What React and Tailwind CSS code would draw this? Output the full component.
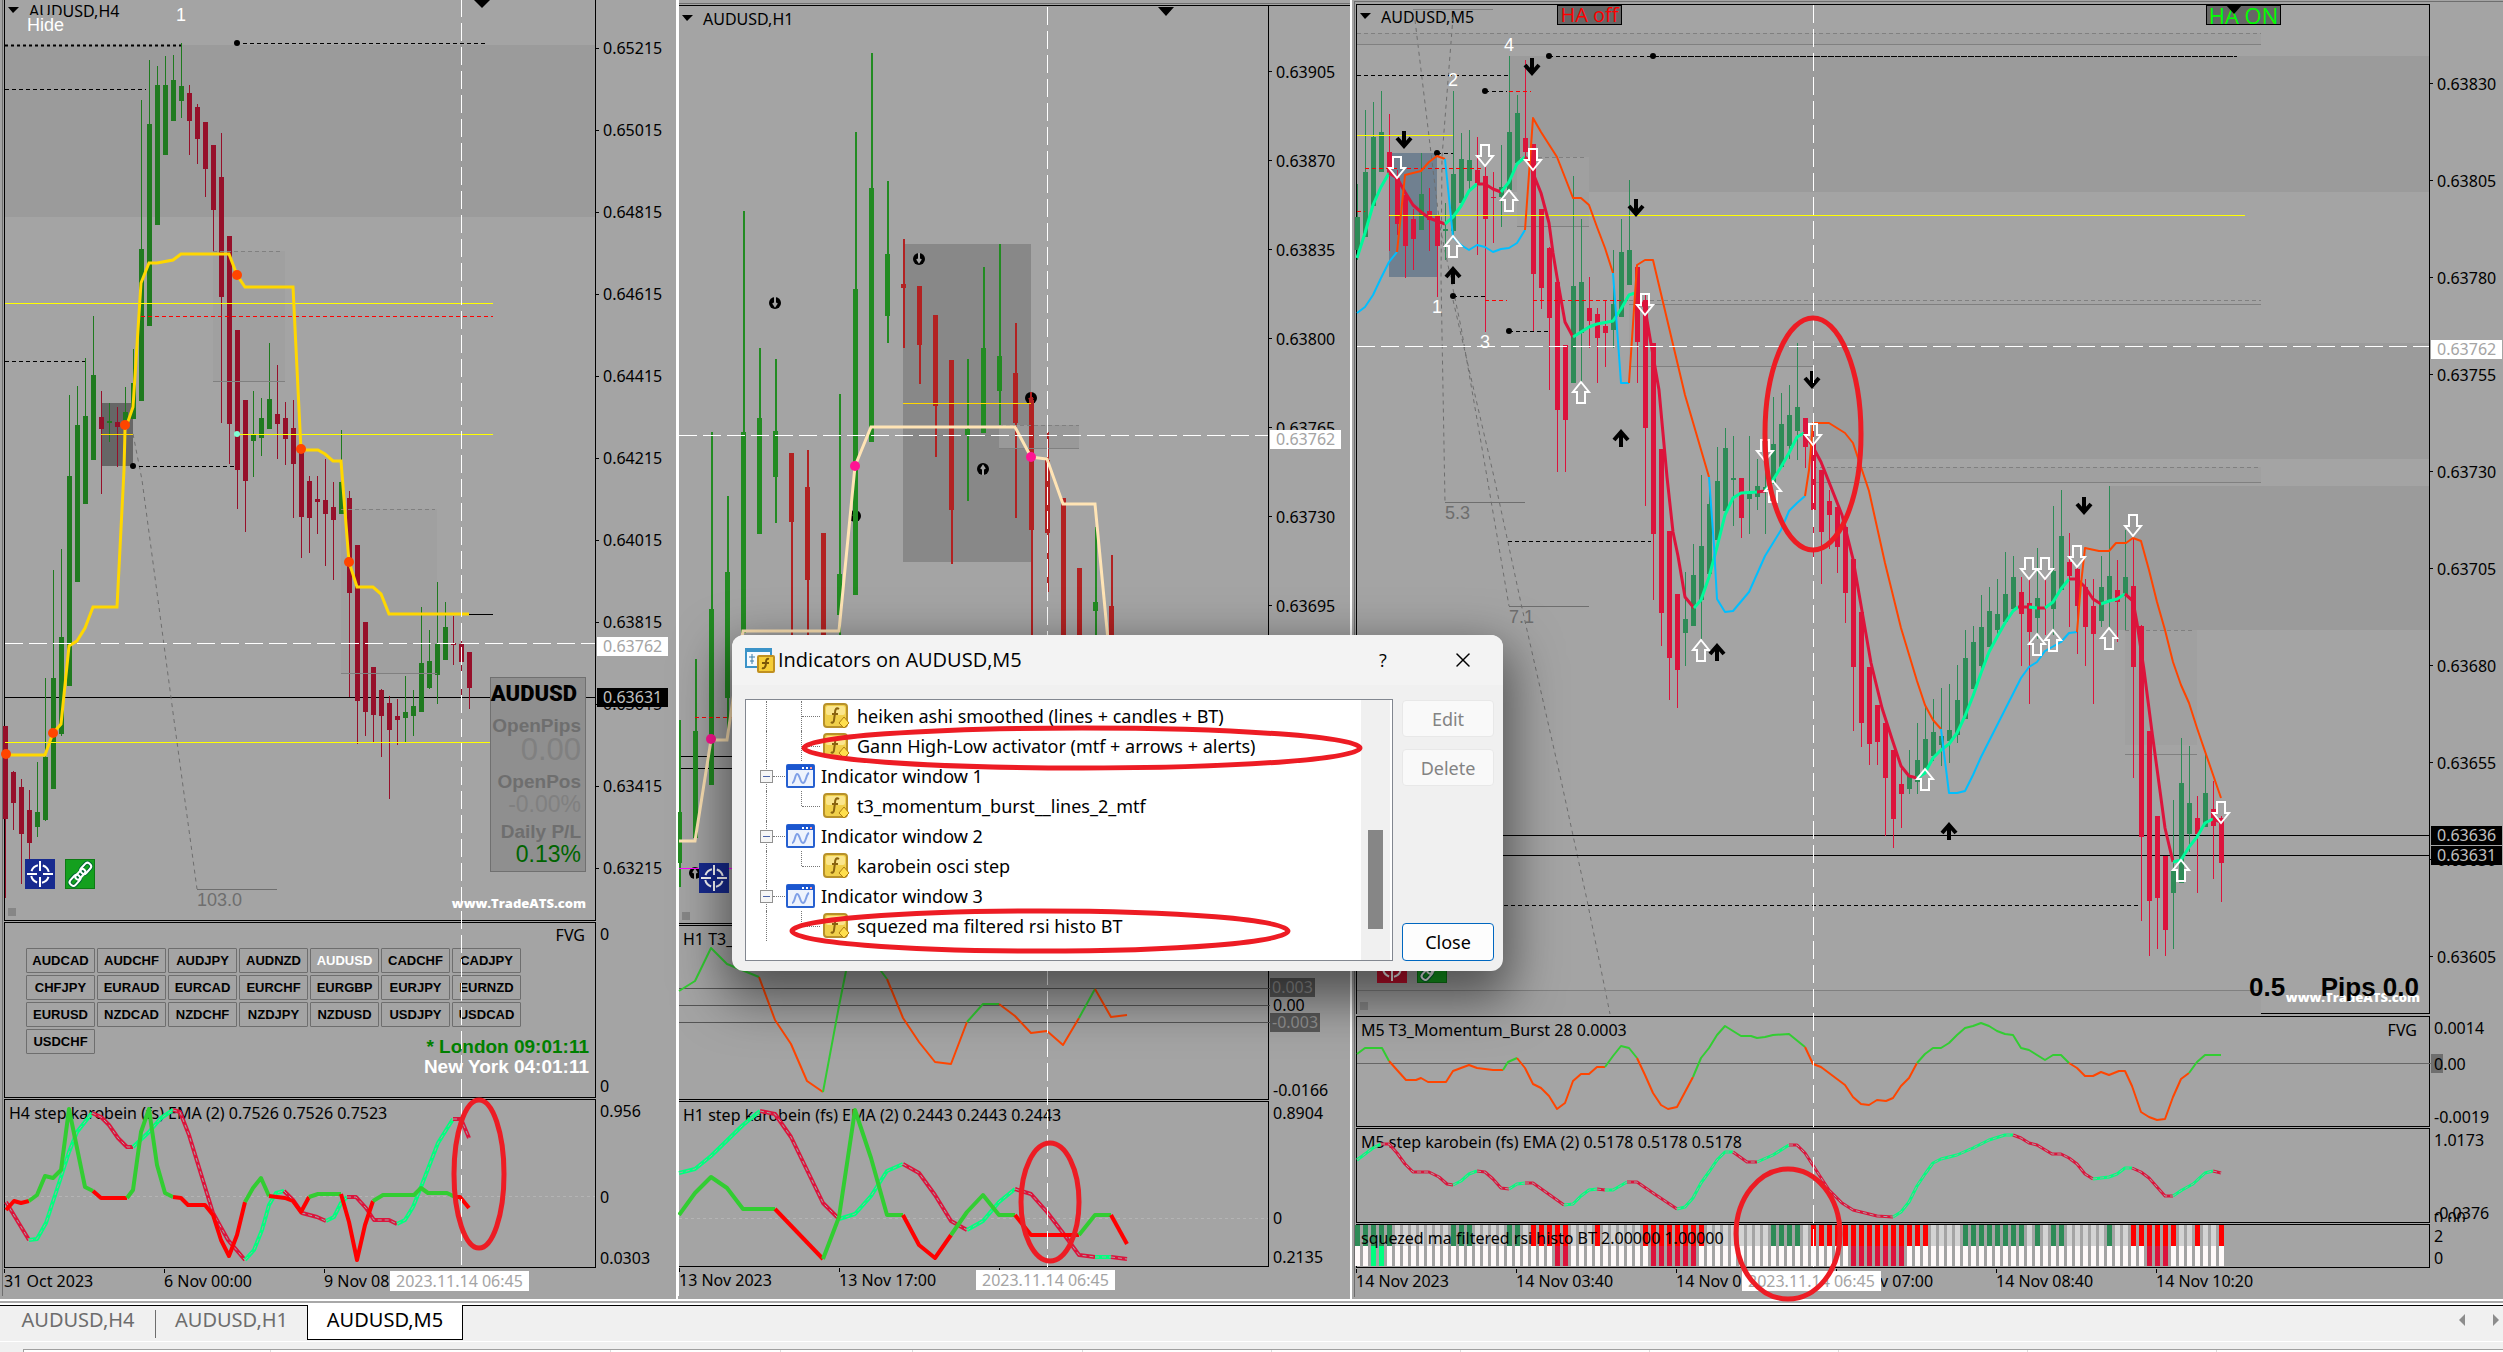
import React from 'react';
import { X } from 'lucide-react';

const GREEN = '#32cd32';
const RED = '#ff0000';
const SPRING = '#00ff7f';
const CRIMSON = '#dc143c';
const ORANGE = '#ff4500';
const SKY = '#00bfff';

// candle: [up, high, bodyTop, bodyBottom, low]
const H4_CANDLES = [
  [0, 726, 726, 819, 898], [0, 771, 772, 803, 830], [0, 779, 787, 834, 884], [0, 790, 810, 843, 860],
  [1, 762, 812, 827, 837], [1, 678, 757, 820, 821], [1, 570, 678, 789, 789], [1, 549, 637, 734, 736],
  [1, 395, 476, 686, 686], [1, 386, 425, 582, 582], [1, 358, 416, 504, 504], [1, 316, 375, 460, 460],
  [0, 391, 417, 429, 494], [1, 403, 421, 423, 442], [0, 407, 422, 427, 467], [1, 387, 412, 427, 427],
  [1, 349, 383, 419, 419], [1, 100, 249, 401, 401], [1, 60, 124, 326, 326], [1, 66, 85, 225, 225],
  [1, 56, 85, 155, 155], [1, 55, 80, 121, 121], [1, 43, 86, 101, 118], [0, 85, 93, 121, 155],
  [0, 104, 107, 139, 164], [0, 122, 122, 169, 197], [0, 145, 145, 210, 252], [0, 133, 177, 297, 423],
  [0, 236, 236, 424, 464], [0, 330, 330, 470, 509], [0, 400, 400, 481, 532], [1, 391, 435, 441, 477],
  [1, 398, 418, 438, 456], [1, 343, 399, 429, 429], [0, 365, 414, 424, 459], [0, 402, 418, 439, 465],
  [0, 400, 428, 464, 518], [0, 450, 450, 517, 558], [0, 476, 481, 518, 553], [0, 476, 499, 502, 534],
  [0, 459, 500, 514, 566], [0, 482, 507, 520, 580], [1, 430, 482, 514, 514], [0, 491, 498, 593, 697],
  [0, 545, 545, 701, 744], [0, 622, 622, 712, 736], [0, 667, 667, 715, 742], [0, 689, 690, 716, 757],
  [0, 696, 703, 730, 799], [0, 699, 716, 720, 745], [1, 676, 712, 718, 742], [1, 690, 706, 716, 736],
  [1, 607, 663, 712, 712], [1, 630, 661, 688, 689], [1, 582, 644, 675, 704], [1, 602, 627, 660, 660],
  [0, 616, 643, 645, 665], [0, 641, 644, 662, 695], [0, 652, 652, 688, 709],
];

const H1_CANDLES = [
  [1, 720, 812, 863, 887], [1, 659, 731, 838, 838], [1, 432, 609, 785, 785], [1, 496, 572, 698, 736],
  [1, 211, 432, 633, 633], [1, 348, 418, 534, 534], [1, 359, 431, 477, 523], [0, 453, 453, 522, 640],
  [0, 450, 487, 580, 640], [0, 533, 533, 640, 640], [1, 394, 574, 615, 640], [1, 132, 289, 595, 595],
  [1, 53, 188, 442, 442], [1, 181, 254, 316, 343], [0, 239, 284, 288, 348], [0, 286, 286, 345, 384],
  [0, 315, 315, 406, 457], [0, 360, 360, 510, 564], [1, 359, 429, 435, 501], [1, 267, 348, 433, 433],
  [1, 244, 356, 391, 425], [0, 323, 373, 423, 518], [0, 397, 400, 530, 640], [0, 432, 460, 533, 592],
  [0, 498, 498, 640, 640], [0, 568, 568, 640, 640], [1, 527, 602, 611, 640], [0, 555, 606, 640, 640],
];

const M5_CANDLES = [
  [1, 184, 217, 250, 260], [1, 110, 172, 237, 237], [1, 102, 137, 206, 206], [1, 91, 132, 172, 172],
  [0, 114, 152, 175, 251], [0, 170, 178, 224, 235], [0, 193, 195, 246, 278], [0, 209, 219, 239, 270],
  [1, 153, 194, 230, 230], [0, 188, 211, 220, 251], [0, 215, 215, 246, 297], [1, 203, 229, 231, 260],
  [1, 91, 174, 231, 237], [1, 133, 159, 203, 203], [1, 130, 160, 181, 190], [0, 137, 170, 183, 255],
  [0, 167, 176, 219, 332], [0, 172, 197, 198, 243], [1, 145, 187, 197, 227], [1, 56, 132, 190, 190],
  [1, 95, 113, 163, 163], [0, 60, 138, 152, 160], [0, 144, 144, 274, 331], [0, 209, 209, 288, 309],
  [0, 247, 248, 318, 390], [0, 280, 282, 410, 472], [0, 345, 345, 420, 472], [1, 176, 286, 383, 383],
  [1, 219, 282, 333, 383], [0, 277, 308, 321, 348], [0, 308, 314, 338, 383], [0, 300, 326, 333, 367],
  [1, 250, 304, 330, 348], [1, 219, 252, 317, 317], [1, 180, 250, 285, 285], [0, 267, 267, 342, 383],
  [0, 295, 300, 428, 506], [0, 343, 343, 534, 600], [0, 449, 449, 613, 646], [0, 531, 531, 658, 700],
  [0, 594, 594, 670, 708], [1, 572, 619, 633, 666], [1, 544, 575, 626, 626], [1, 475, 546, 600, 639],
  [1, 491, 504, 574, 574], [1, 447, 481, 540, 540], [1, 428, 448, 511, 511], [1, 436, 478, 480, 526],
  [0, 478, 478, 518, 538], [1, 436, 494, 499, 534], [1, 459, 486, 497, 510], [1, 470, 487, 491, 534],
  [1, 397, 444, 484, 484], [1, 393, 424, 467, 467], [1, 385, 415, 446, 459], [1, 343, 407, 431, 460],
  [0, 418, 418, 447, 468], [0, 430, 442, 510, 557], [0, 470, 470, 532, 584], [0, 490, 501, 515, 549],
  [0, 507, 507, 547, 573], [0, 527, 527, 593, 623], [0, 559, 559, 667, 731], [0, 612, 612, 723, 747],
  [0, 667, 667, 744, 765], [0, 705, 705, 742, 765], [0, 723, 723, 778, 836], [0, 750, 750, 819, 848],
  [0, 767, 784, 794, 828], [1, 750, 776, 789, 794], [1, 723, 760, 782, 794], [1, 707, 739, 770, 770],
  [1, 699, 732, 756, 761], [1, 688, 736, 745, 766], [1, 684, 730, 741, 763], [1, 665, 700, 735, 743],
  [1, 630, 658, 719, 719], [1, 626, 642, 689, 689], [1, 595, 627, 666, 670], [1, 587, 611, 647, 647],
  [1, 579, 614, 630, 635], [1, 552, 594, 622, 622], [1, 556, 577, 609, 609], [0, 577, 592, 614, 666],
  [0, 579, 603, 632, 704], [1, 548, 598, 618, 639], [0, 577, 607, 608, 635], [1, 506, 571, 609, 635],
  [1, 490, 536, 590, 590], [0, 533, 562, 576, 627], [0, 567, 569, 606, 654], [0, 579, 587, 627, 666],
  [0, 579, 606, 634, 704], [1, 556, 587, 621, 627], [1, 486, 576, 602, 627], [0, 560, 590, 602, 642],
  [1, 530, 577, 595, 630], [0, 538, 586, 667, 778], [0, 625, 626, 837, 921], [0, 731, 731, 901, 956],
  [0, 816, 816, 898, 949], [0, 856, 856, 930, 956], [1, 800, 871, 893, 949], [1, 738, 783, 883, 883],
  [1, 746, 803, 834, 852], [0, 796, 818, 834, 893], [1, 753, 793, 827, 827], [0, 781, 809, 826, 879],
  [0, 816, 818, 863, 902],
];

const H4_STEP = [
  [RED, '6,1210 14,1201 21,1203 29,1201'],
  [GREEN, '29,1201 37,1195 45,1176 53,1178 61,1170 69,1109 85,1187 93,1191'],
  [RED, '93,1191 101,1198 127,1198'],
  [GREEN, '127,1198 133,1190 141,1132 149,1109 157,1165 165,1193 173,1197'],
  [RED, '173,1197 181,1198 188,1205 205,1205 213,1215 221,1240 229,1256 237,1235 245,1202'],
  [GREEN, '245,1202 253,1188 261,1178 269,1196'],
  [RED, '269,1196 285,1198 293,1201 301,1212 309,1197'],
  [GREEN, '309,1197 318,1194 341,1194'],
  [RED, '341,1194 349,1222 357,1260 365,1225 373,1201'],
  [GREEN, '373,1201 383,1195 414,1195 421,1188 428,1193 447,1193 455,1197'],
  [RED, '455,1197 460,1197 469,1208'],
];
const H4_EMA = [
  [CRIMSON, '6,1202 29,1240'],
  [SPRING, '29,1240 37,1239 46,1223 61,1177 69,1152 77,1132 92,1113'],
  [CRIMSON, '92,1113 101,1117 109,1125 118,1138 127,1147 133,1147'],
  [SPRING, '133,1147 149,1132 161,1118 173,1110'],
  [CRIMSON, '173,1110 180,1112 189,1135 213,1213 228,1240 245,1260'],
  [SPRING, '245,1260 254,1250 262,1230 269,1205 276,1193 284,1191'],
  [CRIMSON, '284,1191 293,1200 302,1213 317,1217 326,1221'],
  [SPRING, '326,1221 334,1217 341,1203 347,1197'],
  [CRIMSON, '347,1197 356,1197 366,1208 374,1220 389,1220 397,1224'],
  [SPRING, '397,1224 405,1220 413,1207 421,1187 438,1143 453,1119'],
  [CRIMSON, '453,1119 461,1119 469,1138'],
];

const H1_T3 = [
  [GREEN, '679,991 695,981 711,948 727,964 759,977'],
  [ORANGE, '759,977 775,1020 791,1044 807,1081 823,1092'],
  [GREEN, '823,1092 839,1006 846,971 855,940 871,940 881,971 887,979'],
  [ORANGE, '887,979 903,1018 919,1042 935,1062 951,1064 967,1022'],
  [GREEN, '967,1022 983,1004 999,1004'],
  [ORANGE, '999,1004 1015,1016 1031,1033 1047,1031 1063,1045 1079,1018'],
  [GREEN, '1079,1018 1095,989'],
  [ORANGE, '1095,989 1111,1017 1127,1015'],
];
const H1_STEP = [
  [GREEN, '679,1215 695,1193 711,1177 727,1188 743,1209 775,1209'],
  [RED, '775,1209 823,1259'],
  [GREEN, '823,1259 839,1217 855,1110 871,1158 887,1215 903,1215'],
  [RED, '903,1215 919,1245 935,1258 951,1235'],
  [GREEN, '951,1235 967,1212 983,1195 999,1215 1015,1215'],
  [RED, '1015,1215 1031,1235 1079,1235'],
  [GREEN, '1079,1235 1095,1215 1111,1215'],
  [RED, '1111,1215 1127,1244'],
];
const H1_EMA = [
  [SPRING, '679,1173 695,1169 711,1156 743,1125 760,1111'],
  [CRIMSON, '760,1111 775,1114 791,1137 807,1170 823,1203 839,1219'],
  [SPRING, '839,1219 855,1214 871,1196 887,1171 903,1164'],
  [CRIMSON, '903,1164 919,1173 935,1195 951,1221 967,1230'],
  [SPRING, '967,1230 983,1221 999,1202 1015,1189'],
  [CRIMSON, '1015,1189 1031,1194 1047,1212 1063,1233 1079,1255 1095,1257'],
  [SPRING, '1095,1257 1111,1257'],
  [CRIMSON, '1111,1257 1127,1259'],
];

const MA_UP = '#00fa9a';
const M5_MA = [
  [MA_UP, '1357,258 1365,233 1373,205 1381,187 1389,173'],
  [CRIMSON, '1389,173 1397,178 1405,192 1413,205 1421,212 1429,218 1445,224'],
  [MA_UP, '1445,224 1453,217 1461,206 1469,191 1477,184'],
  [CRIMSON, '1477,184 1485,184 1493,189 1501,192'],
  [MA_UP, '1501,192 1509,182 1517,164 1525,157'],
  [CRIMSON, '1525,157 1531,163 1533,173 1541,193 1549,223 1553,253 1557,277 1565,322 1573,337'],
  [MA_UP, '1573,337 1589,327 1597,324 1613,321 1621,309 1629,295 1635,293'],
  [CRIMSON, '1635,293 1645,308 1650,338 1659,390 1667,477 1673,532 1678,556 1685,597 1694,608'],
  [MA_UP, '1694,608 1701,600 1709,577 1717,547 1725,515 1733,498 1741,493 1757,492'],
  [CRIMSON, '1757,492 1765,491'],
  [MA_UP, '1765,491 1773,480 1781,467 1789,453 1797,437 1804,433'],
  [CRIMSON, '1804,433 1813,447 1821,462 1827,477 1842,515 1853,559 1862,611 1871,663 1882,708 1892,739 1901,766 1909,776 1917,778'],
  [MA_UP, '1917,778 1925,773 1933,758 1941,750 1949,744 1957,733 1965,716 1973,696 1981,673 1989,652 1997,637 2005,623 2013,611 2018,607'],
  [CRIMSON, '2018,607 2029,607'],
  [MA_UP, '2029,607 2037,608'],
  [CRIMSON, '2037,608 2045,608'],
  [MA_UP, '2045,608 2053,602 2061,589 2069,579'],
  [CRIMSON, '2069,579 2077,579 2085,587 2093,599 2101,604'],
  [MA_UP, '2101,604 2109,601 2117,599 2125,594'],
  [CRIMSON, '2125,594 2133,601 2137,623 2144,670 2152,732 2158,776 2165,828 2173,862'],
  [MA_UP, '2173,862 2181,860 2189,847 2197,837 2205,823 2213,819'],
  [CRIMSON, '2213,819 2221,822'],
];
const M5_GANN = [
  [SKY, '1357,313 1365,307 1373,295 1381,278 1389,262 1397,252'],
  [ORANGE, '1397,252 1405,175 1421,171 1429,162 1437,156 1445,159'],
  [SKY, '1445,159 1453,237 1461,245 1469,250 1477,245 1485,247 1493,252 1501,249 1509,248 1517,243 1525,230'],
  [ORANGE, '1525,230 1533,118 1541,132 1557,157 1573,198 1581,198 1589,205 1597,227 1605,248 1613,273'],
  [SKY, '1613,273 1621,383 1629,383'],
  [ORANGE, '1629,383 1637,265 1645,260 1653,260 1685,395 1709,477'],
  [SKY, '1709,477 1714,546 1717,599 1725,612 1733,611 1749,592 1765,556 1781,530 1789,511 1797,503 1805,496'],
  [ORANGE, '1805,496 1809,470 1813,423 1829,423 1845,433 1853,443 1861,467 1869,491 1877,527 1885,563 1901,628 1917,681 1925,705 1933,720 1941,729'],
  [SKY, '1941,729 1949,793 1957,793 1965,791 1973,775 1981,757 2021,678 2029,667 2037,662 2045,651 2061,642 2069,633 2077,632'],
  [ORANGE, '2077,632 2081,584 2085,548 2099,551 2109,551 2116,543 2126,543 2133,538 2141,541 2149,570 2157,602 2165,630 2173,662 2181,685 2189,703 2197,728 2221,798'],
];
const M5_T3 = [
  [GREEN, '1357,1054 1365,1048 1382,1048 1389,1061'],
  [ORANGE, '1389,1061 1397,1070 1406,1080 1416,1080 1421,1078 1428,1082 1446,1082 1453,1071 1469,1065 1477,1068 1493,1070 1503,1070'],
  [GREEN, '1503,1070 1508,1062 1517,1058'],
  [ORANGE, '1517,1058 1525,1068 1533,1084 1541,1088 1549,1096 1557,1109 1565,1103 1573,1081 1581,1074 1589,1074 1597,1067 1605,1067'],
  [GREEN, '1605,1067 1613,1056 1621,1046 1629,1048 1637,1058'],
  [ORANGE, '1637,1058 1645,1075 1653,1093 1661,1105 1668,1109 1677,1107 1685,1092 1693,1077'],
  [GREEN, '1693,1077 1701,1058 1709,1048 1717,1035 1725,1026 1741,1036 1751,1036 1757,1038 1765,1037 1773,1035 1789,1034 1805,1047'],
  [ORANGE, '1805,1047 1813,1064 1821,1067 1845,1085 1853,1097 1861,1104 1869,1105 1877,1100 1886,1101 1893,1098 1901,1086 1909,1078 1917,1063'],
  [GREEN, '1917,1063 1925,1054 1933,1048 1941,1048 1949,1043 1957,1035 1965,1028 1973,1026 1981,1023 1989,1026 1997,1031 2005,1034 2013,1035 2021,1048 2029,1050 2045,1060 2053,1055 2061,1055 2069,1063'],
  [ORANGE, '2069,1063 2077,1068 2085,1076 2093,1076 2101,1072 2109,1075 2119,1071 2125,1071 2132,1086 2141,1112 2149,1117 2157,1120 2165,1119 2173,1097 2181,1079 2189,1073'],
  [GREEN, '2189,1073 2197,1062 2205,1055 2221,1055'],
];
const M5_EMA = [
  [SPRING, '1357,1160 1373,1148 1381,1144'],
  [CRIMSON, '1381,1144 1389,1144 1397,1153 1405,1164 1413,1172 1429,1172 1439,1177 1447,1184 1453,1185'],
  [SPRING, '1453,1185 1461,1181 1469,1174 1477,1171'],
  [CRIMSON, '1477,1171 1485,1172 1493,1179 1501,1188 1509,1189'],
  [SPRING, '1509,1189 1517,1184 1525,1183'],
  [CRIMSON, '1525,1183 1533,1183 1564,1205'],
  [SPRING, '1564,1205 1573,1204 1581,1196 1589,1190 1597,1189'],
  [CRIMSON, '1597,1189 1605,1190'],
  [SPRING, '1605,1190 1613,1190 1627,1182'],
  [CRIMSON, '1627,1182 1637,1182 1653,1193 1677,1209'],
  [SPRING, '1677,1209 1685,1207 1693,1198 1701,1183 1709,1172 1717,1160 1725,1152 1733,1152'],
  [CRIMSON, '1733,1152 1747,1162 1757,1162'],
  [SPRING, '1757,1162 1773,1155 1789,1145'],
  [CRIMSON, '1789,1145 1797,1145 1805,1153 1816,1170 1829,1190 1842,1203 1853,1210 1877,1216 1893,1217'],
  [SPRING, '1893,1217 1901,1212 1909,1202 1917,1186 1925,1174 1933,1163 1941,1159 1957,1155 1973,1148 1989,1140 2005,1135 2013,1135'],
  [CRIMSON, '2013,1135 2021,1138 2029,1143 2037,1145 2052,1154 2061,1154 2069,1158 2077,1164 2085,1174 2093,1179'],
  [SPRING, '2093,1179 2109,1177 2117,1174 2125,1168 2132,1168'],
  [CRIMSON, '2132,1168 2141,1172 2149,1178 2165,1196 2173,1196'],
  [SPRING, '2173,1196 2182,1190 2193,1184 2205,1173 2213,1171'],
  [CRIMSON, '2213,1171 2221,1173'],
];

// one letter per bar: g = green, s = silver, r = red
const HISTO =
  'ggggg' + 'sssssss' + 'ggg' + 'ssss' + 'gg' + 's' + 'rrrrr' + 'sss' + 'r' + 'sssss' + 'rrrrrrrr' + 'ssssssss' +
  'gggg' + 's' + 'rrrrrrrrrrrrrrr' + 'ssss' + 'gggggggg' + 's' + 'g' + 's' + 'gg' + 'sssss' + 'g' + 'ss' + 'rrrrrr' +
  'ss' + 'r' + 'ss' + 'r';
const HISTO_FILL = { g: '#2e8b57', s: '#d3d3d3', r: '#ff0000' };
const HISTO_LOW_RED = [25, 26, 37, 38, 39, 40, 41, 42, 62, 63, 64, 65, 66, 67, 68, 99, 100, 101];

const lowFill = (i) => {
  if (i === 2 || i === 3) return SPRING;
  return HISTO_LOW_RED.includes(i) ? CRIMSON : '#fffafa';
};

const Candles = ({ data, x0, step, up, down, wick = 1 }) => (
  <g shapeRendering="crispEdges">
    {data.map(([isUp, h, t, b, l], i) => (
      <g key={i} fill={isUp ? up : down}>
        <rect x={x0 + i * step} y={h} width={wick} height={Math.max(l - h, 1)} />
        <rect x={x0 + i * step - 2} y={t} width="5" height={Math.max(b - t, 1)} />
      </g>
    ))}
  </g>
);

const Series = ({ data, width = 2 }) => (
  <g fill="none" strokeWidth={width} strokeLinejoin="round">
    {data.map(([color, points], i) => (
      <polyline key={i} points={points} stroke={color} />
    ))}
  </g>
);

const Ema = ({ data, width = 4 }) => (
  <>
    <Series data={data} width={width} />
    <g fill="none" stroke="#a4a4a4" strokeWidth="1" strokeDasharray="4 3">
      {data.map(([, points], i) => (
        <polyline key={i} points={points} />
      ))}
    </g>
  </>
);

const HLine = ({ y, x1, x2, color = '#000', dash, width = 1 }) => (
  <line x1={x1} x2={x2} y1={y + 0.5} y2={y + 0.5} stroke={color} strokeWidth={width} strokeDasharray={dash} />
);

const Crosshair = ({ x, y, x1, x2, y1 }) => (
  <g stroke="#fff" strokeDasharray="18 6">
    <line x1={x + 0.5} x2={x + 0.5} y1={y1} y2="1267" />
    <line x1={x1} x2={x2} y1={y + 0.5} y2={y + 0.5} />
  </g>
);

const HollowArrow = ({ x, y, up }) => (
  <path
    d={up ? 'M0 1 L8 11 H4 V22 H-4 V11 H-8 Z' : 'M-4 1 H4 V12 H8 L0 22 L-8 12 H-4 Z'}
    transform={`translate(${x} ${y})`}
    fill="none"
    stroke="#fff"
    strokeWidth="2"
  />
);

const BlackArrow = ({ x, y, up }) => (
  <path
    d={up ? 'M0 18 V3 M-7 11 L0 3 L7 11' : 'M0 0 V15 M-7 7 L0 15 L7 7'}
    transform={`translate(${x} ${y})`}
    fill="none"
    stroke="#000"
    strokeWidth="4"
  />
);

const Signal = ({ x, y, up, color = '#a4a4a4' }) => (
  <g transform={`translate(${x} ${y})`}>
    <ellipse rx="6" ry="6" fill="#000" />
    <path
      d={up ? 'M0 6 V-2 M-2 0 L0 -3 L2 0' : 'M0 -6 V2 M-2 0 L0 3 L2 0'}
      stroke={color}
      strokeWidth="2"
      fill="none"
    />
  </g>
);

const TargetIcon = ({ x, y, fill = '#172a8f' }) => (
  <g transform={`translate(${x} ${y})`}>
    <rect width="30" height="30" fill={fill} />
    <g fill="none" stroke="#fff" strokeWidth="2">
      <circle cx="15" cy="15" r="9" strokeDasharray="9 5" strokeDashoffset="-3" />
      <path d="M15 2 V12 M15 18 V28 M2 15 H12 M18 15 H28" />
    </g>
  </g>
);

const ChainIcon = ({ x, y }) => (
  <g transform={`translate(${x} ${y})`}>
    <rect x="0.5" y="0.5" width="29" height="29" fill="#14a01e" stroke="#0d7a14" />
    <g transform="rotate(-48 15 15)" fill="none">
      <g stroke="#063" strokeWidth="4">
        <rect x="1" y="12" width="12" height="7" rx="3" />
        <rect x="17" y="12" width="12" height="7" rx="3" />
        <path d="M10 15 H21" />
      </g>
      <g stroke="#fff" strokeWidth="2">
        <rect x="1" y="12" width="12" height="7" rx="3" />
        <rect x="17" y="12" width="12" height="7" rx="3" />
        <rect x="9" y="13" width="12" height="5" rx="2" />
      </g>
    </g>
  </g>
);

const Dots = ({ at, r = 3, fill = '#000' }) => at.map(([x, y]) => <circle key={`${x}-${y}`} cx={x} cy={y} r={r} fill={fill} />);

const Drawing = ({ offset, children }) => (
  <svg className="pointer-events-none absolute inset-0 h-full w-full" aria-hidden="true">
    <g transform={`translate(${-offset} 0)`}>{children}</g>
  </svg>
);

const PriceScale = ({ prices, rowClass }) => (
  <ul>
    {prices.map((p) => (
      <li key={p} className={`flex items-center gap-1 ${rowClass}`}>
        <span className="h-px w-[3px] bg-black" />
        {p}
      </li>
    ))}
  </ul>
);

const TimeScale = ({ labels, badge, badgeClass }) => (
  <div className="relative flex h-[29px] items-center overflow-hidden pb-[5px]">
    {labels.map((l) => (
      <span key={l} className="relative w-40 shrink-0 whitespace-nowrap before:absolute before:top-0 before:left-0 before:h-1 before:w-px before:bg-black">
        {l}
      </span>
    ))}
    <span className={`absolute top-0.5 h-5 bg-white px-1.5 leading-5 whitespace-nowrap text-[#a4a4a4] ${badgeClass}`}>{badge}</span>
  </div>
);

const SYMBOLS = [
  'AUDCAD', 'AUDCHF', 'AUDJPY', 'AUDNZD', 'AUDUSD', 'CADCHF', 'CADJPY',
  'CHFJPY', 'EURAUD', 'EURCAD', 'EURCHF', 'EURGBP', 'EURJPY', 'EURNZD',
  'EURUSD', 'NZDCAD', 'NZDCHF', 'NZDJPY', 'NZDUSD', 'USDJPY', 'USDCAD',
  'USDCHF',
];

const ChartH4 = () => (
  <section className="relative flex flex-col gap-px overflow-hidden border-r-2 border-white pl-1">
    <div className="flex h-[921px]">
      <div className="flex-1 border-x border-b border-black">
        <h2 className="mt-[3px] ml-6 leading-4">AUDUSD,H4</h2>
      </div>
      <div className="relative w-20 pt-[7px]">
        <PriceScale
          rowClass="h-[82px]"
          prices={['0.65215', '0.65015', '0.64815', '0.64615', '0.64415', '0.64215', '0.64015', '0.63815', '0.63615', '0.63415', '0.63215']}
        />
        <span className="absolute top-[637px] left-px h-[19px] bg-white px-1.5 leading-[19px] text-[#a4a4a4]">0.63762</span>
        <span className="absolute top-[688px] left-px h-[19px] bg-black px-1.5 leading-[19px] text-[#c0c0c0]">0.63631</span>
      </div>
    </div>
    <div className="flex h-[176px]">
      <div className="relative flex-1 border border-black pt-[25px] pl-[21px]">
        <div className="absolute top-1 right-2.5 leading-4">FVG</div>
        <div className="grid w-max grid-cols-[repeat(7,69px)] gap-0.5 font-['Liberation_Sans',sans-serif] text-[13px] font-bold">
          {SYMBOLS.map((s) => (
            <button
              key={s}
              type="button"
              className={`h-[25px] rounded-[1px] border border-[#6e6e6e] leading-none ${s === 'AUDUSD' ? 'text-white' : 'text-black'}`}
            >
              {s}
            </button>
          ))}
        </div>
        <div className="absolute right-1.5 bottom-5 text-right font-['Liberation_Sans',sans-serif] text-[19px] leading-5 font-bold">
          <p className="text-[#008000]">* London 09:01:11</p>
          <p className="text-white">New York 04:01:11</p>
        </div>
      </div>
      <div className="flex w-20 flex-col justify-between py-0.5 pl-1 leading-5">
        <span>0</span>
        <span>0</span>
      </div>
    </div>
    <div className="flex h-[169px]">
      <div className="flex-1 border border-black pt-[5px] pl-1 leading-4">H4 step karobein (fs) EMA (2) 0.7526 0.7526 0.7523</div>
      <div className="relative flex w-20 flex-col justify-between pt-0.5 pl-1 leading-5">
        <span>0.956</span>
        <span className="absolute top-[88px]">0</span>
        <span>0.0303</span>
      </div>
    </div>
    <TimeScale labels={['31 Oct 2023', '6 Nov 00:00', '9 Nov 08:00']} badge="2023.11.14 06:45" badgeClass="left-[386px]" />

    <Drawing offset={0}>
      <rect x="2" width="1" height="1296" fill="#6e6e6e" />
      <rect x="5" y="45" width="590" height="172" fill="#9b9b9b" />
      <rect x="213" y="251" width="72" height="130" fill="#a0a0a0" />
      <rect x="341" y="509" width="96" height="164" fill="#a0a0a0" />
      <HLine y={697} x1={5} x2={595} />
      <rect x="101" y="403" width="32" height="63" fill="#666" />
      <path d="M133 434 L142 480 L174 720 L197 889" fill="none" stroke="#6e6e6e" strokeDasharray="4 4" />
      <HLine y={889} x1={197} x2={277} color="#6e6e6e" />
      <Candles data={H4_CANDLES} x0={5} step={8} up="#1f7a1f" down="#96102a" />
      <HLine y={251} x1={213} x2={283} color="#808080" dash="4 3" />
      <HLine y={381} x1={213} x2={285} color="#808080" />
      <HLine y={509} x1={341} x2={435} color="#808080" dash="4 3" />
      <HLine y={673} x1={341} x2={437} color="#808080" />
      <HLine y={45} x1={5} x2={181} width={2} dash="3 3" />
      <HLine y={43} x1={243} x2={485} dash="4 3" />
      <HLine y={89} x1={5} x2={146} dash="4 3" />
      <HLine y={361} x1={5} x2={85} dash="4 3" />
      <HLine y={466} x1={139} x2={237} dash="4 3" />
      <HLine y={303} x1={5} x2={493} color="#ff0" />
      <HLine y={434} x1={237} x2={493} color="#ff0" />
      <HLine y={434} x1={101} x2={133} color="#ffd700" />
      <HLine y={742} x1={5} x2={493} color="#ff0" />
      <HLine y={316} x1={141} x2={493} color="#f00" dash="4 3" />
      <HLine y={614} x1={469} x2={493} />
      <polyline
        points="6,755 45,755 53,733 61,724 69,646 77,641 85,628 93,607 117,607 124,470 125,430 133,407 141,283 149,263 157,263 173,260 181,254 229,254 237,275 245,287 293,287 301,450 318,450 325,454 333,461 341,461 349,562 357,587 373,587 381,594 389,614 469,614"
        fill="none"
        stroke="#ffd700"
        strokeWidth="3"
      />
      <Dots at={[[6, 754], [53, 733], [125, 425], [237, 275], [301, 449], [349, 562]]} r={5} fill={ORANGE} />
      <Dots at={[[237, 43], [133, 466]]} />
      <Dots at={[[237, 434]]} fill="#7fffd4" />
      <HLine y={1196} x1={5} x2={595} color="#b4b4b4" dash="3 3" />
      <Ema data={H4_EMA} />
      <Series data={H4_STEP} width={4} />
      <Crosshair x={461} y={643} x1={5} x2={595} y1={-1} />
      <path d="M474 0 H490 L482 8 Z M8 7 H19 L13 13 Z" />
      <TargetIcon x={25} y={859} />
      <ChainIcon x={65} y={859} />
      <rect x="8" y="908" width="8" height="8" fill="#868686" />
    </Drawing>

    <span className="absolute top-[5px] left-[176px] font-['Liberation_Sans',sans-serif] text-lg leading-5 text-white">1</span>
    <span className="absolute top-[15px] left-[27px] bg-[#a4a4a4] font-['Liberation_Sans',sans-serif] text-lg leading-5 text-white">Hide</span>
    <span className="absolute top-[890px] left-[197px] font-['Liberation_Sans',sans-serif] text-lg leading-5 text-[#6e6e6e]">103.0</span>
    <span className="absolute top-[893px] right-[90px] font-['Open_Sans',sans-serif] text-[13px] leading-5 font-extrabold text-white">www.TradeATS.com</span>
    <aside className="absolute top-[677px] right-[90px] flex h-[195px] w-[96px] flex-col items-end border border-[#707070] bg-[#8f8f8f] pr-1 font-['Liberation_Sans',sans-serif] text-[#6e6e6e]">
      <strong className="mt-1 mr-1 text-right font-['Roboto',sans-serif] text-[22px] leading-6 font-black text-black">AUDUSD</strong>
      <b className="mt-2 text-[19px] leading-6">OpenPips</b>
      <span className="text-[31px] leading-6 text-[#808080]">0.00</span>
      <b className="mt-2 text-[19px] leading-6">OpenPos</b>
      <span className="text-[23px] leading-5 text-[#808080]">-0.00%</span>
      <b className="mt-2 text-[19px] leading-5">Daily P/L</b>
      <span className="text-[23px] leading-6 text-[#006400]">0.13%</span>
    </aside>
  </section>
);

const ChartH1 = () => (
  <section className="relative flex flex-col gap-px overflow-hidden border-r-2 border-white pl-px">
    <div className="mt-[5px] flex h-[919px] border-t border-black">
      <div className="flex-1 border-r border-b border-black">
        <h2 className="mt-[5px] ml-6 leading-4">AUDUSD,H1</h2>
      </div>
      <div className="relative w-[81px] pt-[21px]">
        <PriceScale
          rowClass="h-[89px]"
          prices={['0.63905', '0.63870', '0.63835', '0.63800', '0.63765', '0.63730', '0.63695']}
        />
        <span className="absolute top-[424px] left-px h-[19px] bg-white px-1.5 leading-[19px] text-[#a4a4a4]">0.63762</span>
      </div>
    </div>
    <div className="flex h-[175px]">
      <div className="flex-1 border-y border-r border-black pt-[5px] pl-1 leading-4">H1 T3_</div>
      <div className="relative flex w-[81px] flex-col items-start justify-end pl-1 leading-5">
        <span className="absolute top-[53px] left-px bg-[#585858] px-0.5 leading-[19px] text-[#909090]">0.003</span>
        <span className="absolute top-[70px]">0.00</span>
        <span className="absolute top-[88px] left-px bg-[#585858] px-0.5 leading-[19px] text-[#909090]">-0.003</span>
        <span>-0.0166</span>
      </div>
    </div>
    <div className="flex h-[166px]">
      <div className="flex-1 border-y border-r border-black pt-[5px] pl-1 leading-4">H1 step karobein (fs) EMA (2) 0.2443 0.2443 0.2443</div>
      <div className="relative flex w-[81px] flex-col justify-between pt-0.5 pl-1 leading-5">
        <span>0.8904</span>
        <span className="absolute top-[107px]">0</span>
        <span>0.2135</span>
      </div>
    </div>
    <TimeScale labels={['13 Nov 2023', '13 Nov 17:00', '14 Nov 09:00']} badge="2023.11.14 06:45" badgeClass="left-[297px]" />

    <Drawing offset={678}>
      <rect x="678" width="1" height="1296" fill="#fff" />
      <rect x="679" y="3" width="672" height="1" fill="#6e6e6e" />
      <rect x="903" y="244" width="128" height="318" fill="#888" />
      <rect x="999" y="425" width="80" height="23" fill="#999" />
      <HLine y={756} x1={679} x2={1268} />
      <HLine y={768} x1={679} x2={1268} />
      <Signal x={775} y={303} />
      <Signal x={919} y={259} />
      <Signal x={1031} y={398} color="#b22222" />
      <Signal x={983} y={469} up />
      <Signal x={855} y={516} up color="#228b22" />
      <Signal x={695} y={873} up />
      <Candles data={H1_CANDLES} x0={679} step={16} up="#228b22" down="#b22222" wick={2} />
      <HLine y={403} x1={903} x2={1031} color="#ffd700" />
      <HLine y={425} x1={999} x2={1079} color="#808080" dash="4 3" />
      <HLine y={448} x1={999} x2={1079} color="#808080" />
      <HLine y={717} x1={695} x2={760} color="#f00" dash="4 3" />
      <HLine y={868} x1={679} x2={760} color="#f0f" />
      <polyline
        points="679,841 695,841 711,740 727,740 743,631 839,631 855,466 871,427 1015,427 1031,457 1047,459 1063,504 1095,504 1108,640"
        fill="none"
        stroke="#ffe4b5"
        strokeWidth="3"
      />
      <Dots at={[[855, 466], [1031, 457], [711, 739]]} r={5} fill="#ff1493" />
      <HLine y={988} x1={679} x2={1270} color="#555" />
      <HLine y={1005} x1={679} x2={1270} color="#555" />
      <HLine y={1022} x1={679} x2={1270} color="#555" />
      <Series data={H1_T3} />
      <HLine y={1218} x1={679} x2={1268} color="#b4b4b4" dash="3 3" />
      <Ema data={H1_EMA} />
      <Series data={H1_STEP} width={4} />
      <Crosshair x={1047} y={435} x1={679} x2={1268} y1={7} />
      <path d="M1158 7 H1174 L1166 16 Z M682 15 H693 L687 21 Z" />
      <TargetIcon x={699} y={863} />
      <rect x="682" y="912" width="8" height="8" fill="#868686" />
    </Drawing>
  </section>
);

const DOWN_HOLLOW = [[1397, 156], [1485, 144], [1533, 148], [1645, 293], [1765, 439], [1813, 423], [2029, 557], [2045, 557], [2077, 545], [2133, 514], [2221, 801]];
const UP_HOLLOW = [[1453, 235], [1509, 189], [1581, 381], [1773, 480], [1701, 639], [1925, 768], [2037, 633], [2053, 629], [2109, 627], [2181, 859]];
const DOWN_BLACK = [[1404, 131], [1532, 58], [1636, 199], [1812, 371], [2084, 497]];
const UP_BLACK = [[1453, 266], [1621, 429], [1717, 643], [1949, 822]];

const ChartM5 = () => (
  <section className="relative flex flex-col gap-px overflow-hidden pl-1">
    <div className="mt-1 flex h-[1010px]">
      <div className="flex-1 border border-black">
        <h2 className="mt-1 ml-6 leading-4">AUDUSD,M5</h2>
      </div>
      <div className="relative w-[73px] pt-[31px]">
        <PriceScale
          rowClass="h-[97px]"
          prices={['0.63830', '0.63805', '0.63780', '0.63755', '0.63730', '0.63705', '0.63680', '0.63655', '0.63630', '0.63605']}
        />
        <span className="absolute top-[336px] left-px h-[19px] bg-white px-1.5 leading-[19px] text-[#a4a4a4]">0.63762</span>
        <span className="absolute top-[822px] left-px h-[19px] bg-black px-1.5 leading-[19px] text-[#c0c0c0]">0.63636</span>
        <span className="absolute top-[842px] left-px h-[19px] bg-black px-1.5 leading-[19px] text-[#c0c0c0]">0.63631</span>
      </div>
    </div>
    <div className="mt-px flex h-[111px]">
      <div className="flex flex-1 justify-between border border-black pt-[5px] pr-3 pl-1 leading-4">
        <span>M5 T3_Momentum_Burst 28 0.0003</span>
        <span>FVG</span>
      </div>
      <div className="relative flex w-[73px] flex-col justify-between pt-0.5 pl-1 leading-5">
        <span>0.0014</span>
        <span className="absolute top-[38px] left-px h-[19px] w-3 bg-[#6e6e6e]" />
        <span className="absolute top-[38px]">0.00</span>
        <span>-0.0019</span>
      </div>
    </div>
    <div className="flex h-[95px]">
      <div className="flex-1 border border-black pt-[5px] pl-1 leading-4">M5 step karobein (fs) EMA (2) 0.5178 0.5178 0.5178</div>
      <div className="relative flex w-[73px] flex-col justify-between pt-0.5 pl-1 leading-5">
        <span>1.0173</span>
        <span>-0.0376</span>
        <span className="absolute top-[82px] h-3 overflow-hidden leading-4">0.00</span>
      </div>
    </div>
    <div className="flex h-[44px]">
      <div className="flex-1 border border-black pt-[5px] pl-1 leading-4">
        <span className="relative z-10">squezed ma filtered rsi histo BT 2.00000 1.00000</span>
      </div>
      <div className="flex w-[73px] flex-col justify-between pt-0.5 pl-1 leading-5">
        <span>2</span>
        <span>0</span>
      </div>
    </div>
    <TimeScale
      labels={['14 Nov 2023', '14 Nov 03:40', '14 Nov 05:20', '14 Nov 07:00', '14 Nov 08:40', '14 Nov 10:20']}
      badge="2023.11.14 06:45"
      badgeClass="left-[386px]"
    />

    <Drawing offset={1352}>
      <rect x="1354" y="1" width="1" height="1296" fill="#6e6e6e" />
      <rect x="1354" y="1" width="1149" height="1" fill="#6e6e6e" />
      <rect x="1509" y="56" width="920" height="136" fill="#9b9b9b" />
      <rect x="1813" y="343" width="616" height="116" fill="#9b9b9b" />
      <rect x="2109" y="486" width="320" height="144" fill="#9b9b9b" />
      <g fill="#a0a0a0">
        <rect x="1357" y="33" width="904" height="11" />
        <rect x="1517" y="157" width="72" height="69" />
        <rect x="1629" y="304" width="184" height="62" />
        <rect x="1813" y="467" width="448" height="15" />
        <rect x="2125" y="630" width="72" height="115" />
        <rect x="1357" y="990" width="904" height="24" />
      </g>
      <rect x="1389" y="153" width="48" height="124" fill="#708090" />
      <g fill="none" stroke="#6e6e6e" strokeDasharray="4 4">
        <path d="M1415 20 L1431 153 L1440 227 L1461 327 L1487 477 L1509 606" />
        <path d="M1453 17 L1442 157 L1441 277 L1445 502" />
        <path d="M1453 300 L1494 477 L1522 608 L1561 780 L1587 900 L1610 1014" />
      </g>
      <HLine y={502} x1={1445} x2={1525} color="#6e6e6e" />
      <HLine y={606} x1={1509} x2={1589} color="#6e6e6e" />
      <HLine y={835} x1={1357} x2={2429} />
      <HLine y={855} x1={1357} x2={2429} />
      <HLine y={905} x1={1357} x2={2141} dash="4 3" />
      <HLine y={541} x1={1508} x2={1651} dash="4 3" />
      <g>
        <HLine y={9} x1={1413} x2={1493} color="#808080" />
        <HLine y={33} x1={1357} x2={2261} color="#808080" dash="4 3" />
        <HLine y={44} x1={1357} x2={2261} color="#808080" />
        <HLine y={157} x1={1517} x2={1587} color="#808080" dash="4 3" />
        <HLine y={226} x1={1517} x2={1589} color="#808080" />
        <HLine y={300} x1={1629} x2={2261} color="#808080" dash="4 3" />
        <HLine y={304} x1={1629} x2={2261} color="#808080" />
        <HLine y={366} x1={1629} x2={1813} color="#808080" />
        <HLine y={467} x1={1813} x2={2261} color="#808080" dash="4 3" />
        <HLine y={482} x1={1813} x2={2261} color="#808080" />
        <HLine y={630} x1={2125} x2={2195} color="#808080" dash="4 3" />
        <HLine y={754} x1={2125} x2={2197} color="#808080" />
        <HLine y={990} x1={1357} x2={2261} color="#808080" />
      </g>
      <Candles data={M5_CANDLES} x0={1357} step={8} up="#2e8b57" down={CRIMSON} />
      <HLine y={75} x1={1357} x2={1509} dash="4 3" />
      <HLine y={91} x1={1485} x2={1507} dash="4 3" />
      <HLine y={91} x1={1509} x2={1531} color="#f00" dash="4 3" />
      <HLine y={56} x1={1549} x2={1653} dash="4 3" />
      <HLine y={56} x1={1653} x2={2237} dash="6 1" />
      <HLine y={153} x1={1437} x2={1453} dash="4 3" />
      <HLine y={296} x1={1453} x2={1485} dash="4 3" />
      <HLine y={331} x1={1509} x2={1549} dash="4 3" />
      <HLine y={168} x1={1365} x2={1483} color="#f00" dash="4 3" />
      <HLine y={211} x1={1357} x2={1365} color="#f00" dash="4 3" />
      <HLine y={300} x1={1485} x2={1507} color="#f00" dash="4 3" />
      <HLine y={300} x1={1533} x2={1629} color="#f00" dash="4 3" />
      <HLine y={135} x1={1357} x2={1453} color="#ff0" />
      <HLine y={215} x1={1389} x2={2245} color="#ff0" />
      <Dots at={[[1437, 153], [1485, 91], [1549, 56], [1653, 56], [1453, 296], [1509, 331]]} />
      <Series data={M5_MA} width={3} />
      <Series data={M5_GANN} />
      {DOWN_HOLLOW.map(([x, y]) => <HollowArrow key={x} x={x} y={y} />)}
      {UP_HOLLOW.map(([x, y]) => <HollowArrow key={x} x={x} y={y} up />)}
      {DOWN_BLACK.map(([x, y]) => <BlackArrow key={x} x={x} y={y} />)}
      {UP_BLACK.map(([x, y]) => <BlackArrow key={x} x={x} y={y} up />)}
      <HLine y={1063} x1={1357} x2={2431} color="#666" />
      <Series data={M5_T3} />
      <Ema data={M5_EMA} width={3} />
      <g shapeRendering="crispEdges">
        {HISTO.split('').map((c, i) => (
          <g key={i}>
            <rect x={1355 + i * 8} y="1225" width="5" height="21" fill={HISTO_FILL[c]} />
            <rect x={1355 + i * 8} y="1246" width="5" height="20" fill={lowFill(i)} />
          </g>
        ))}
      </g>
      <Crosshair x={1813} y={346} x1={1357} x2={2429} y1={5} />
      <path d="M1360 13 H1371 L1365 19 Z" />
      <TargetIcon x={1377} y={953} fill="#c0102c" />
      <ChainIcon x={1417} y={953} />
      <rect x="1360" y="1002" width="8" height="8" fill="#868686" />
    </Drawing>

    <div className="font-['Liberation_Sans',sans-serif] text-lg leading-5">
      <span className="absolute top-[70px] left-[96px] text-white">2</span>
      <span className="absolute top-[35px] left-[152px] text-white">4</span>
      <span className="absolute top-[297px] left-[80px] text-white">1</span>
      <span className="absolute top-[332px] left-[128px] text-white">3</span>
      <span className="absolute top-[503px] left-[93px] text-[#6e6e6e]">5.3</span>
      <span className="absolute top-[607px] left-[157px] text-[#6e6e6e]">7.1</span>
    </div>
    <button type="button" className="absolute top-[5px] left-[205px] flex h-5 w-[65px] items-center justify-center border border-black bg-[#666] font-['Open_Sans',sans-serif] text-xl leading-[18px] whitespace-nowrap text-[#f00]">
      HA off
    </button>
    <button type="button" className="absolute top-[5px] right-[222px] flex h-5 w-[75px] items-center justify-center border border-black bg-[#666] font-['Open_Sans',sans-serif] text-[22px] leading-[18px] whitespace-nowrap text-[#0f0]">
      HA ON
    </button>
    <span className="absolute top-[5px] right-[261px] border-x-8 border-t-[9px] border-x-transparent border-t-black" />
    <span className="absolute top-[987px] right-[83px] font-['Open_Sans',sans-serif] text-[13px] leading-5 font-extrabold text-white">www.TradeATS.com</span>
    <div className="absolute top-[975px] right-[84px] flex w-[170px] justify-between font-['Liberation_Sans',sans-serif] text-[26px] leading-6 font-bold">
      <span>0.5</span>
      <span>Pips 0.0</span>
    </div>
  </section>
);

const FxIcon = () => (
  <svg width="28" height="26" viewBox="0 0 28 26" className="shrink-0">
    <rect x="1" y="1" width="23" height="23" rx="3" fill="#f0cf4a" stroke="#b8912a" strokeWidth="2" />
    <rect x="3" y="3" width="19" height="9" rx="2" fill="#fae58c" />
    <path d="M16 6 C13 4 12 7 12 10 L11 17 C11 20 9 20 8 19 M9 11 H15" fill="none" stroke="#8a6410" strokeWidth="2" />
    <path d="M21 14 L26 20 L21 25 L16 20 Z" fill="#ffdf4d" stroke="#b07d10" />
  </svg>
);

const WindowIcon = () => (
  <svg width="29" height="24" viewBox="0 0 29 24" className="shrink-0">
    <rect x="1" y="1" width="27" height="22" rx="1" fill="#eef3fd" stroke="#2660d0" strokeWidth="2" />
    <rect x="1" y="1" width="27" height="5" fill="#1b56cf" />
    <path d="M16 4 h2 M20 4 h2" stroke="#fff" strokeWidth="2" />
    <path d="M24 4 h2" stroke="#f99" strokeWidth="2" />
    <path d="M6 19 C9 19 9 10 11 10 C14 10 14 19 17 19 C20 19 20 10 23 9" fill="none" stroke="#7f9fe6" strokeWidth="2" />
  </svg>
);

const TREE = [
  { label: 'heiken ashi smoothed (lines + candles + BT)' },
  { label: 'Gann High-Low activator (mtf + arrows + alerts)' },
  { label: 'Indicator window 1', parent: true },
  { label: 't3_momentum_burst__lines_2_mtf', last: true },
  { label: 'Indicator window 2', parent: true },
  { label: 'karobein osci step', last: true },
  { label: 'Indicator window 3', parent: true },
  { label: 'squezed ma filtered rsi histo BT', last: true },
];

const TreeRow = ({ row }) => (
  <li className="relative flex h-[30px] items-center">
    <span className="absolute top-0 left-5 h-full border-l border-dotted border-[#777]" />
    {row.parent ? (
      <>
        <span className="absolute top-[15px] left-[27px] w-3 border-t border-dotted border-[#777]" />
        <button type="button" aria-label={`Collapse ${row.label}`} className="relative ml-3.5 flex h-[13px] w-[13px] items-center justify-center border border-[#919191] bg-[#f5f5f5]">
          <span className="h-px w-[7px] bg-[#4b63a7]" />
        </button>
        <span className="ml-[13px]">
          <WindowIcon />
        </span>
        <span className="ml-1.5">{row.label}</span>
      </>
    ) : (
      <>
        <span className={`absolute top-0 left-[55px] border-l border-dotted border-[#777] ${row.last ? 'h-[15px]' : 'h-full'}`} />
        <span className="absolute top-[15px] left-[56px] w-[18px] border-t border-dotted border-[#777]" />
        <span className="ml-[77px]">
          <FxIcon />
        </span>
        <span className="ml-1.5">{row.label}</span>
      </>
    )}
  </li>
);

const IndicatorsDialog = () => (
  <div
    role="dialog"
    aria-label="Indicators on AUDUSD,M5"
    className="absolute top-[635px] left-[732px] z-20 w-[771px] overflow-hidden rounded-xl bg-[#f0f0f0] shadow-[0_20px_50px_8px_rgba(0,0,0,0.5)]"
  >
    <header className="flex h-[50px] items-center bg-[#f3f3f3] pr-[30px] pl-3">
      <svg width="32" height="26" viewBox="0 0 32 26">
        <rect x="2" y="2" width="25" height="18" fill="#f4faff" stroke="#3b93c8" strokeWidth="2" />
        <rect x="2" y="1" width="25" height="4" fill="#3b93c8" />
        <path d="M8 7 V17 M5 10 H11 M6 14 H10" stroke="#3b7ca8" fill="none" />
        <rect x="14" y="9" width="16" height="16" rx="1" fill="#f5cd38" stroke="#c09020" strokeWidth="2" />
        <path d="M25 12 C22 11 22 14 22 16 C22 20 20 22 18 21 M18 16 H25" fill="none" stroke="#7a5608" strokeWidth="2" />
      </svg>
      <h2 className="ml-0.5 flex-1 font-['Open_Sans',sans-serif] text-xl">Indicators on AUDUSD,M5</h2>
      <button type="button" aria-label="Help" className="mr-[60px] w-5 font-['Open_Sans',sans-serif] text-lg">
        ?
      </button>
      <button type="button" aria-label="Close dialog" className="flex h-5 w-5 items-center justify-center">
        <X className="h-6 w-6 shrink-0" strokeWidth={1.5} />
      </button>
    </header>
    <div className="flex gap-[9px] pt-3.5 pr-[9px] pb-2.5 pl-[13px]">
      <div className="flex h-[262px] flex-1 border border-[#828790] bg-white">
        <ul className="flex-1 overflow-hidden pt-px text-lg leading-6 whitespace-nowrap">
          {TREE.map((row) => (
            <TreeRow key={row.label} row={row} />
          ))}
        </ul>
        <div className="mr-0.5 w-[29px] bg-[#f0f0f0] pt-[130px]">
          <div className="mx-auto h-[99px] w-[15px] bg-[#868686]" />
        </div>
      </div>
      <div className="flex w-[92px] flex-col gap-3 text-lg">
        <button type="button" disabled className="mt-px h-[37px] rounded-[4px] border border-[#e8e8e8] bg-[#f9f9f9] text-[#838383]">
          Edit
        </button>
        <button type="button" disabled className="h-[37px] rounded-[4px] border border-[#e8e8e8] bg-[#f9f9f9] text-[#838383]">
          Delete
        </button>
        <button type="button" className="mt-auto h-[38px] rounded-[4px] border border-[#0067c0] bg-[#fdfdfd]">
          Close
        </button>
      </div>
    </div>
  </div>
);

// hand-drawn highlights over the charts and the dialog
const Highlights = () => (
  <svg className="pointer-events-none absolute inset-0 z-30 h-full w-full" aria-hidden="true">
    <g fill="none" stroke="#ed1c24" strokeWidth="5">
      <ellipse cx="479" cy="1174" rx="25" ry="74" />
      <ellipse cx="1050" cy="1202" rx="29" ry="59" />
      <ellipse cx="1813" cy="434" rx="48" ry="116" />
      <ellipse cx="1788" cy="1234" rx="52" ry="65" />
      <ellipse cx="1082" cy="748" rx="278" ry="20" />
      <ellipse cx="1040" cy="931" rx="248" ry="20" />
    </g>
  </svg>
);

const HEADER_COLS = ['w-[247px]', 'w-[340px]', 'w-[170px]', 'w-[132px]', 'w-[170px]', 'w-[189px]', 'w-[189px]', 'w-[189px]', 'w-[189px]', 'w-[189px]', 'w-[189px]'];

const TabBar = () => (
  <nav className="flex h-[35px] items-start justify-between bg-[#f0f0f0] text-xl leading-7">
    <div className="flex">
      <button type="button" className="relative h-8 w-[156px] pb-1 text-[#6d6d6d] after:absolute after:top-1 after:right-0 after:h-[28px] after:w-px after:bg-[#6d6d6d]">
        AUDUSD,H4
      </button>
      <button type="button" className="h-8 w-[151px] pb-1 text-[#6d6d6d]">AUDUSD,H1</button>
      <button type="button" className="-mt-px h-[35px] w-[156px] border border-t-0 border-black bg-white pb-1 text-black">AUDUSD,M5</button>
    </div>
    <div className="flex gap-7 pt-2 pr-1">
      <button type="button" aria-label="Scroll tabs left" className="h-3 w-1.5">
        <svg width="6" height="12"><path d="M6 0 V12 L0 6 Z" fill="#8c8c8c" /></svg>
      </button>
      <button type="button" aria-label="Scroll tabs right" className="h-3 w-1.5">
        <svg width="6" height="12"><path d="M0 0 V12 L6 6 Z" fill="#8c8c8c" /></svg>
      </button>
    </div>
  </nav>
);

const App = () => (
  <main className="relative overflow-hidden bg-[#f0f0f0] font-['Noto_Sans',sans-serif] text-base text-black">
    <div className="grid grid-cols-[678fr_674fr_1151fr] bg-[#a4a4a4]">
      <ChartH4 />
      <ChartH1 />
      <ChartM5 />
    </div>
    <div className="h-1.5 border-y-2 border-white bg-[#a8a8a8]" />
    <div className="h-px bg-black" />
    <TabBar />
    <div className="h-px bg-white" />
    <div className="mt-[7px] ml-[23px] flex h-[5px] overflow-hidden border-t border-l border-[#a0a0a0] bg-white">
      {HEADER_COLS.map((w, i) => (
        <span key={i} className={`shrink-0 border-r border-[#dcdcdc] ${w}`} />
      ))}
    </div>
    <IndicatorsDialog />
    <Highlights />
  </main>
);

export default App;
